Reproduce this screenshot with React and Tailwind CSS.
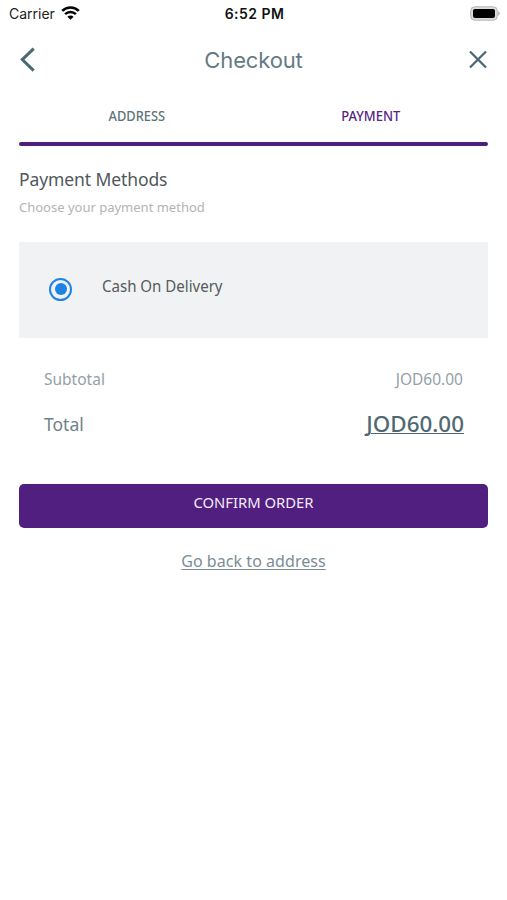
function StatusBar() {
  return (
    <div className="grid h-[28px] grid-cols-3 items-center pl-[9px] pr-[7px] font-['Inter',sans-serif] text-[14px] leading-[28px] text-[#222]">
      <div className="flex items-center gap-[6px]">
        <span>Carrier</span>
        <svg className="mb-[2px]" width="19" height="14" viewBox="0 0 19 14" fill="none" stroke="#050505">
          <path d="M1.2 4.9a11.8 11.8 0 0 1 16.6 0" strokeWidth="2.7" />
          <path d="M4.1 8.2a7.7 7.7 0 0 1 10.8 0" strokeWidth="2.5" />
          <path d="M9.5 13.8 6.4 10.7a4.4 4.4 0 0 1 6.2 0z" fill="#050505" stroke="none" />
        </svg>
      </div>
      <span className="whitespace-nowrap text-center text-[14px] font-semibold tracking-[0.45px] text-[#111]">6:52 PM</span>
      <svg className="mb-[2px] justify-self-end" width="31" height="15" viewBox="0 0 31 15">
        <rect x="1.7" y=".8" width="26.6" height="13.4" rx="4" fill="#dcdcdc" stroke="#b5b5b5" />
        <rect x="4" y="3" width="22" height="9" rx="2" fill="#000" />
        <path d="M29.2 5q1.6.7 1.6 2.5t-1.6 2.5z" fill="#b5b5b5" />
      </svg>
    </div>
  );
}

function Header() {
  return (
    <header className="flex h-[64px] items-center justify-between pl-[19px] pr-[19px] text-[#4b6974]">
      <svg width="20" height="26" viewBox="0 0 20 26" fill="none" stroke="currentColor" strokeWidth="3">
        <path d="M14.7 1.6 3.3 12.6 14.7 23.6" />
      </svg>
      <h1 className="font-['Inter',sans-serif] text-[22px] leading-[28px] tracking-[-0.15px] text-[#647b84]">Checkout</h1>
      <svg width="20" height="20" viewBox="0 0 20 20" fill="none" stroke="currentColor" strokeWidth="2.3">
        <path d="m2 1.5 16 16M18 1.5 2 17.5" />
      </svg>
    </header>
  );
}

export default function App() {
  return (
    <div className="h-[900px] w-[507px] overflow-hidden bg-white font-['Noto_Sans',sans-serif]">
      <StatusBar />
      <Header />
      <main className="px-[19px]">
        <nav className="grid h-[50px] grid-cols-2 pt-[14px] text-center text-[13.5px] font-medium leading-[20px] text-[#5c747c]">
          <span><span className="inline-block origin-center scale-x-[0.95]">ADDRESS</span></span>
          <span className="text-[#552581]"><span className="inline-block origin-center scale-x-[0.96]">PAYMENT</span></span>
        </nav>
        <div className="h-[4px] rounded-full bg-[#4f1f7d]" />
        <h2 className="mt-[20px] text-[17.5px] leading-[27px] tracking-[-0.1px] text-[#50575a]">Payment Methods</h2>
        <p className="mt-[4px] text-[13px] leading-[20px] text-[#b0b5b8]">Choose your payment method</p>
        <label className="mt-[25px] flex h-[96px] items-center bg-[#f0f2f4] pl-[30px]">
          <span className="mb-[2px] flex size-[23px] items-center justify-center rounded-full border-[2.5px] border-[#1d83e5]">
            <span className="size-[12px] rounded-full bg-[#1d83e5]" />
          </span>
          <span className="mb-[9px] ml-[30px] origin-left scale-x-[0.94] text-[16px] leading-[22px] text-[#555b5e]">Cash On Delivery</span>
        </label>
        <dl className="px-[25px] pt-[30px]">
          <div className="flex h-[22px] items-center justify-between text-[15.5px] leading-[22px] text-[#94a1a7]">
            <dt>Subtotal</dt>
            <dd>JOD60.00</dd>
          </div>
          <div className="-mr-px mt-[18px] flex h-[32px] items-center justify-between text-[#718188]">
            <dt className="text-[17.5px] leading-[32px]">Total</dt>
            <dd className="text-[22.4px] font-medium leading-[32px] text-[#4f6973] underline decoration-1">JOD60.00</dd>
          </div>
        </dl>
        <button className="mt-[44px] block h-[44px] w-full rounded-[5px] bg-[#501f7f] pb-[8px] text-[14.8px] leading-[22px] text-[#f5eafa]">CONFIRM ORDER</button>
        <div className="mt-[22px] text-center text-[16px] leading-[22px] tracking-[0.05px] text-[#7b8c93]">
          <a className="underline decoration-1 underline-offset-2">Go back to address</a>
        </div>
      </main>
    </div>
  );
}
